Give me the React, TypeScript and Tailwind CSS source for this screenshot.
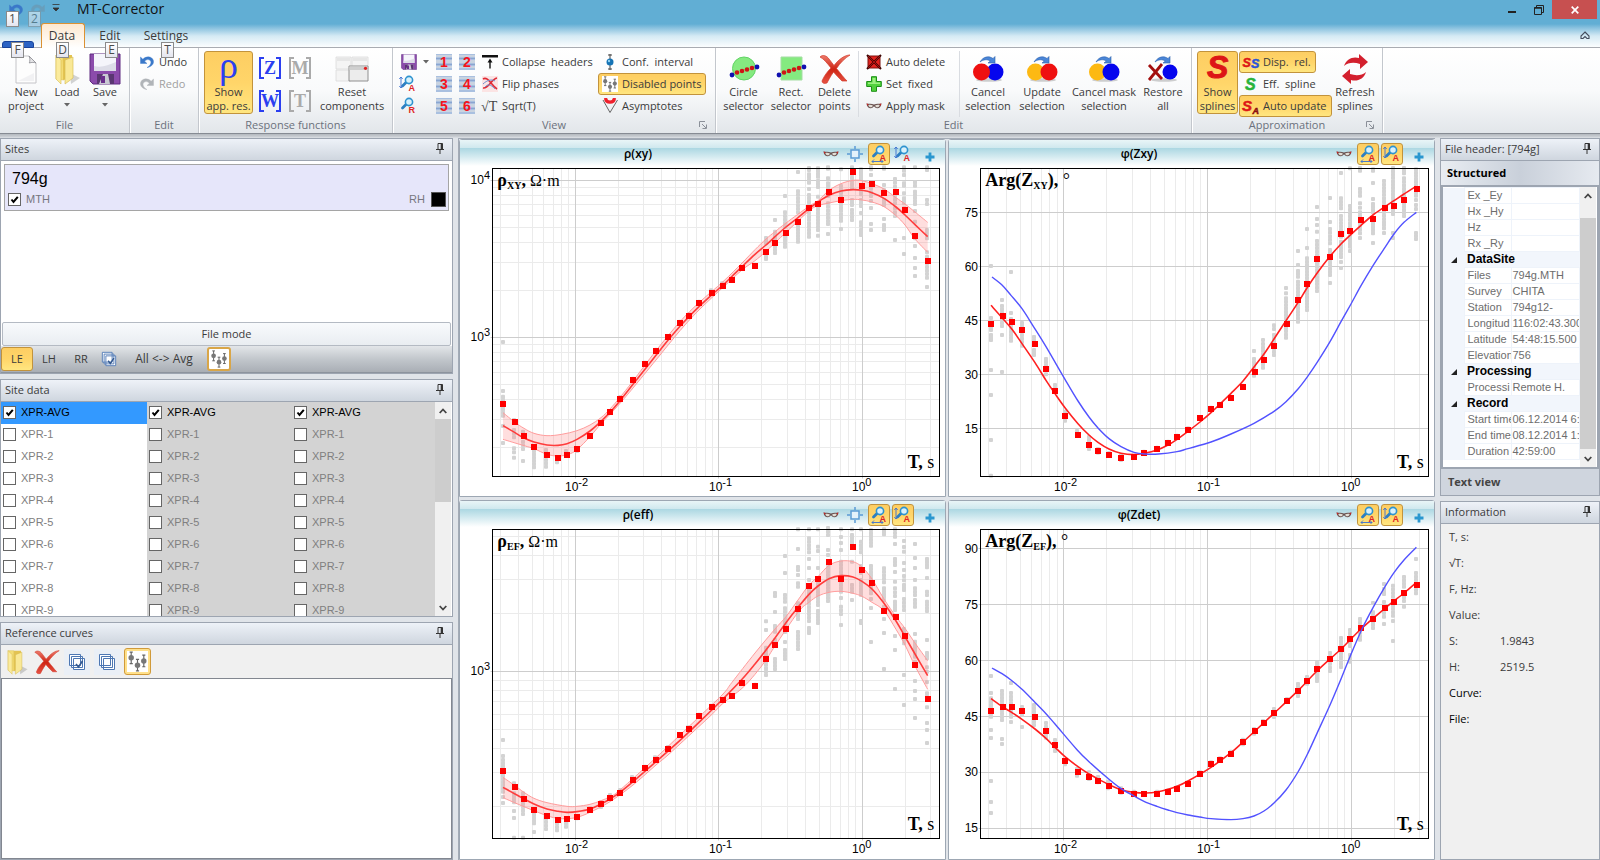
import { useId } from "react";
import type { ReactNode } from "react";
import clsx from "clsx";

type Pt = [number, number];

/* ---------- small icons ---------- */

function UndoIcon({ flip = false, color = "#3a78c9" }: { flip?: boolean; color?: string }) {
  return (
    <svg viewBox="0 0 16 16" className={clsx("size-4", flip && "-scale-x-100")}>
      <path d="M1.5 3v6.5H8L5.6 7.2C7 5.6 9.6 5 11.2 6.400C13 8.300 11.500 11.500 8 13.600C13 12.800 15.300 9.500 14.300 6.300C13 2.400 7.400 1.500 3.900 5.300Z" fill={color} stroke={color} strokeWidth=".4" />
    </svg>
  );
}

function PageIcon() {
  return (
    <svg viewBox="0 0 32 32" className="size-8">
      <path d="M6 3h13l7 7v20H6z" fill="#fdfdfd" stroke="#c4c4c8" />
      <path d="M19 3c1.500 3 .8 5 .3 7 2.500-.8 4.700-.8 6.700 0z" fill="#e6e6e8" stroke="#8c8c92" strokeWidth=".8" />
      <path d="M8 28h16v-8z" fill="#f1f1f3" />
    </svg>
  );
}

function FolderIcon({ className = "size-8" }: { className?: string }) {
  return (
    <svg viewBox="0 0 32 32" className={className}>
      <path d="M19 20l10 5-9 6z" fill="#000" opacity=".16" />
      <path d="M5 2h7l1 25-8-1z" fill="#f3dc74" stroke="#dcc04e" strokeWidth=".6" />
      <path d="M12 2h9v23l-9 2z" fill="#e3c352" />
      <path d="M14 7l8-3v21l-8 6z" fill="#f9e896" stroke="#d5b84a" strokeWidth=".6" />
      <path d="M5 2l5 5v24l-5-5z" fill="#fbeb9d" stroke="#d9bd50" strokeWidth=".6" />
    </svg>
  );
}

function SaveIcon({ className = "size-8" }: { className?: string }) {
  return (
    <svg viewBox="0 0 32 32" className={className}>
      <path d="M1 1h30v30H4l-3-3z" fill="#8b4bab" stroke="#5f2b80" />
      <path d="M5 1h22v17H5z" fill="#f5f5fb" />
      <path d="M5 13c8 2 14-1 22-4v9H5z" fill="#dddde8" />
      <path d="M8 21h17v10H8z" fill="#c9c9d3" />
      <path d="M8 21h6l-4 10H8zM19 21h6v10h-4z" fill="#5a3672" />
      <path d="M12 23h4v7h-4z" fill="#6b2f8d" />
    </svg>
  );
}

function ResetIcon() {
  return (
    <svg viewBox="0 0 34 32" className="h-8 w-[34px]">
      <g fill="#f4f4f4" stroke="#dadada" strokeWidth=".8">
        <path d="M1 4h15v12H1zM17 4h16v12H17zM1 17h15v11H1z" />
      </g>
      <path d="M2 5h13v3H2zM18 5h14v3H18z" fill="#e6e6e6" />
      <path d="M14 13h19v15H14z" fill="#ececec" stroke="#909090" />
      <path d="M14.500 13.500h18v3.500h-18z" fill="#cfcfcf" />
      <circle cx="30.500" cy="15.300" r="1.600" fill="#e02020" />
    </svg>
  );
}

function ZoomIcon({ letter, arrow }: { letter: string; arrow?: "x" | "y" }) {
  return (
    <svg viewBox="0 0 18 18" className="size-[18px]">
      <path d="M3.500 11L8 6.500" stroke="#2d7fc1" strokeWidth="2.800" strokeLinecap="round" />
      <circle cx="10" cy="5" r="3.600" fill="#d8f1fb" stroke="#2e93cf" strokeWidth="1.600" />
      <text x="9.500" y="15.500" fontSize="9" fontWeight="700" fill="#e02424" fontFamily="Liberation Sans, sans-serif">{letter}</text>
      {arrow === "x" && <path d="M2 16.500h11M4 14.500l-2 2 2 2M11 14.500l2 2-2 2" stroke="#3a6fd0" fill="none" strokeWidth=".9" />}
      {arrow === "y" && <path d="M2 2v11M.3 4L2 2l1.700 2M.3 11L2 13l1.700-2" stroke="#3a6fd0" fill="none" strokeWidth=".9" />}
    </svg>
  );
}

function NumberIcon({ n }: { n: number }) {
  return (
    <svg viewBox="0 0 16 16" className="size-4">
      <path d="M0 0h16v16H0z" fill="#a9c0e0" />
      <path d="M0 1h16v2H0zM0 6h16v3H0zM0 12h16v2H0z" fill="#c9d3e0" />
      <path d="M0 4.500h16M0 10.500h16" stroke="#8aa5cf" />
      <text x="8" y="13" textAnchor="middle" fontSize="14" fontWeight="700" fill="#f5141c" fontFamily="Liberation Sans, sans-serif">{n}</text>
    </svg>
  );
}

function CollapseIcon() {
  return (
    <svg viewBox="0 0 16 16" className="size-4">
      <path d="M0 1h16v2.500H0z" fill="#111" />
      <path d="M8 4.500l2.500 4h-5z" fill="#111" />
      <path d="M8 7v7.500" stroke="#111" strokeWidth="1.400" />
    </svg>
  );
}

function FlipIcon() {
  return (
    <svg viewBox="0 0 16 16" className="size-4">
      <path d="M0 0h16v16H0z" fill="#fbe4e4" />
      <path d="M1 3c5-3 8 6 14 10M1 12c6 1 8-9 14-10" stroke="#e02a35" strokeWidth="1.600" fill="none" />
      <path d="M1 8c4-4 9-5 12-3M3 11c4-5 8 0 10 2" stroke="#6d8fd0" fill="none" />
    </svg>
  );
}

function SqrtIcon() {
  return (
    <svg viewBox="0 0 16 16" className="size-4 overflow-visible">
      <text x="-1" y="13" fontSize="14" fill="#444" fontFamily="Liberation Serif, serif">√T</text>
    </svg>
  );
}

function ConfIcon() {
  return (
    <svg viewBox="0 0 16 16" className="size-4">
      <path d="M8 0v16M6 1h4M6 15h4" stroke="#444" />
      <circle cx="8" cy="8" r="3.500" fill="#1573b5" />
      <circle cx="7" cy="7" r="1.200" fill="#8dd0f3" />
    </svg>
  );
}

function PointsIcon({ className = "size-4" }: { className?: string }) {
  return (
    <svg viewBox="0 0 20 20" className={className}>
      <path d="M0 0h20v20H0z" fill="#fff" />
      <g stroke="#666" strokeWidth="1.100">
        <path d="M4 1v11M2.500 1h3M2.500 12h3M10 8v11M8.500 8h3M8.500 19h3M16 4v11M14.500 4h3M14.500 15h3" />
      </g>
      <g fill="#777">
        <circle cx="4" cy="6.500" r="2.600" />
        <circle cx="10" cy="13.500" r="2.600" />
        <circle cx="16" cy="9.500" r="2.600" />
      </g>
    </svg>
  );
}

function AsymptoteIcon() {
  return (
    <svg viewBox="0 0 16 16" className="size-4">
      <path d="M1 2l7 12.500L15.500 2" stroke="#666" fill="none" />
      <path d="M3.500 0c.6 5.500 8.400 5.500 9 0" stroke="#f0202c" strokeWidth="3.200" fill="none" />
    </svg>
  );
}

function SelectorIcon({ shape }: { shape: "circle" | "rect" }) {
  const dots: Pt[] = [[9, 19.5], [14, 18], [19, 16.5], [24, 15]];
  return (
    <svg viewBox="0 0 32 32" className="size-8">
      {shape === "circle" ? (
        <circle cx="16" cy="15.500" r="11.500" fill="#85ea80" stroke="#62d466" />
      ) : (
        <path d="M6 4h21v23H6z" fill="#85ea80" stroke="#a5dda4" />
      )}
      {dots.map(([x, y]) => <circle key={x} cx={x} cy={y} r="2.300" fill="#cf1515" />)}
      <circle cx="4" cy="22" r="2.400" fill="#1010b0" />
      <circle cx="29" cy="14" r="2.400" fill="#1010b0" />
    </svg>
  );
}

function CrossIcon({ className = "size-8" }: { className?: string }) {
  const id = useId();
  return (
    <svg viewBox="0 0 32 32" className={className}>
      <defs>
        <linearGradient id={id} x1="0" y1="0" x2="0" y2="1">
          <stop offset="0" stopColor="#ee7e6f" />
          <stop offset=".5" stopColor="#cf2413" />
          <stop offset="1" stopColor="#e65345" />
        </linearGradient>
      </defs>
      <path d="M1 4C4 1 8 3 10 6L15 12.500C20 6 26 2 31 2C26 5 21 10 17.500 15.500C22 21 25 25 28 28H23C20 25 17 22 14.500 19C11 24 9 28 8 30C5 31 3 30 3 28C5 23 8 19 12 15C8 10 5 6 1 4Z" fill={`url(#${id})`} stroke="#d33a2a" strokeWidth=".7" />
    </svg>
  );
}

function AutoDeleteIcon() {
  return (
    <svg viewBox="0 0 16 16" className="size-4">
      <path d="M2 2h12v12H2z" fill="#e3221d" stroke="#7d120e" />
      <path d="M1 1l14 14M15 1L1 15" stroke="#3b0604" strokeWidth="2" />
      <path d="M2 2l12 12M14 2L2 14" stroke="#c11" strokeWidth=".8" />
    </svg>
  );
}

function PlusIcon() {
  return (
    <svg viewBox="0 0 16 16" className="size-4">
      <path d="M5.500.7h5v4.800h4.800v5h-4.800v4.800h-5v-4.800H.7v-5h4.800z" fill="#52d23c" stroke="#1d8f16" />
      <path d="M6.500 2h3v4.500H14V8H2V6.500h4.500z" fill="#9bf07f" />
    </svg>
  );
}

function MaskIcon() {
  return (
    <svg viewBox="0 0 16 16" className="size-4">
      <path d="M.5 5.500c2 .4 5 .2 7.500 1 2.500-.8 5.500-.6 7.500-1-.3 3-1.800 4.800-4.200 4.800-1.900 0-2.500-1.800-3.300-1.800s-1.400 1.800-3.300 1.800C2.300 10.300.8 8.500.5 5.500z" fill="#6b5452" />
      <path d="M2.300 6.900c1.700-.3 3.400-.1 4.600.5-.6 2.500-3.900 2.700-4.600-.5zM13.700 6.900c-1.700-.3-3.400-.1-4.600.5.6 2.500 3.900 2.700 4.600-.5z" fill="#e2ddd5" />
      <path d="M.5 5.500l2 .4-.8 2zM15.500 5.500l-2 .4.800 2z" fill="#c22" />
    </svg>
  );
}

function BallsIcon({ left, right }: { left: "red" | "gold" | "cross"; right: "blue" | "red" }) {
  const fill = { red: "#ef1010", gold: "#fdb913", blue: "#0505ee" };
  const back = <circle cx="23" cy="19" r={left === "cross" ? 7.5 : 8.5} fill={fill[right]} />;
  return (
    <svg viewBox="0 0 32 32" className="size-8">
      <ellipse cx="17" cy="27" rx="13" ry="1.800" fill="#000" opacity=".18" />
      {left === "red" && back}
      {left === "cross" ? (
        <path d="M2 12l13 14M15 11L2 27" stroke="#a30f0f" strokeWidth="2.800" />
      ) : (
        <circle cx="9.500" cy="19" r="8.500" fill={fill[left]} />
      )}
      {left !== "red" && back}
      <path d="M8 9C11 3.500 17 2.500 21 5.500L23 3.500V10h-7l2.300-2C15 6 11.500 6.500 8 9z" fill="#4a86d8" stroke="#2d62ad" strokeWidth=".6" />
    </svg>
  );
}

type Glyph = { s: string; x: number; y: number; size: number; color: string };

function SplineIcon({ className = "size-4", glyphs }: { className?: string; glyphs: Glyph[] }) {
  return (
    <svg viewBox="0 0 32 32" className={clsx(className, "overflow-visible")} fontFamily="Liberation Sans, sans-serif" fontStyle="italic" fontWeight="700">
      {glyphs.map((g, i) => (
        <text key={i} x={g.x} y={g.y} fontSize={g.size} fill={g.color} stroke={g.color}>{g.s}</text>
      ))}
    </svg>
  );
}

function RefreshIcon() {
  return (
    <svg viewBox="0 0 32 32" className="size-8">
      <path d="M5 13C7 6 14 3 20 5L20 1l9 8-8 7v-5C15 9 9 9.500 5 13z" fill="#d3202e" />
      <path d="M27 19C25 26 18 29 12 27L12 31l-9-8 8-7v5C17 23 23 22.500 27 19z" fill="#d3202e" />
    </svg>
  );
}

function StackIcon({ checked = false, className = "size-[18px]" }: { checked?: boolean; className?: string }) {
  return (
    <svg viewBox="0 0 18 18" className={className}>
      <g fill="#fff" stroke="#4d77b3">
        <path d="M1.500 1.500h11v11h-11zM3.500 3.500h11v11h-11zM5.500 5.500h11v11h-11z" />
      </g>
      {checked && <path d="M8 11l2.500 3L14.500 8" stroke="#33588f" strokeWidth="1.600" fill="none" />}
    </svg>
  );
}

function PinIcon() {
  return (
    <svg viewBox="0 0 10 12" className="h-3 w-2.5">
      <path d="M3 .5h4.500v6H3zM1 6.500h8M5 7v4" fill="none" stroke="#333" />
      <path d="M6.500.5v6" stroke="#333" strokeWidth="1.600" />
    </svg>
  );
}

function FitIcon() {
  return (
    <svg viewBox="0 0 16 16" className="size-4">
      <path d="M4 4h8v8H4z" fill="#e4f1fb" stroke="#5b9bd5" strokeWidth="1.500" />
      <path d="M8 0v3M8 13v3M0 8h3M13 8h3" stroke="#5b9bd5" strokeWidth="1.500" />
    </svg>
  );
}

function AddIcon() {
  return (
    <svg viewBox="0 0 10 10" className="size-2.5">
      <path d="M5 .5v9M.5 5h9" stroke="#2a97cf" strokeWidth="2.800" />
    </svg>
  );
}

/* ---------- ribbon ---------- */

const active = "border-[#c2933c] bg-linear-to-b from-[#fdce63] via-[#ffd569] to-[#ffe680] rounded-[3px]";

function KeyTip({ k, className }: { k: string; className: string }) {
  return (
    <span className={clsx("absolute z-10 flex h-4 w-[13px] items-center justify-center border border-[#8a8a8a] bg-linear-to-b from-white to-[#e4e5ef] text-[12px] leading-none text-[#4b4b4b]", className)}>
      {k}
    </span>
  );
}

function Group({ title, width, pad = "pl-1", launcher, children }: { title: string; width: string; pad?: string; launcher?: boolean; children: ReactNode }) {
  return (
    <section className={clsx("flex shrink-0 flex-col border-r border-[#c3c7cd] pt-[3px] shadow-[1px_0_0_#fff]", width)}>
      <div className={clsx("flex h-[67px]", pad)}>{children}</div>
      <div className="grid h-4 grid-cols-[1fr_auto_1fr] items-center text-[#6b717c]">
        <span />
        <h2>{title}</h2>
        {launcher && (
          <button aria-label={`${title} options`} className="mr-2 justify-self-end">
            <svg viewBox="0 0 8 8" className="size-2">
              <path d="M.5 6V.5H6M3 3l4 4M7.500 3.500v4h-4" fill="none" stroke="#8b9099" />
            </svg>
          </button>
        )}
      </div>
    </section>
  );
}

function Big({ icon, lines, width, on, caret }: { icon: ReactNode; lines: string[]; width: string; on?: boolean; caret?: boolean }) {
  return (
    <button className={clsx("flex h-[63px] shrink-0 flex-col items-center border pt-px leading-[14px] whitespace-nowrap", width, on ? active : "border-transparent")}>
      <span className="flex h-8 items-center">{icon}</span>
      {lines.map((l) => <span key={l}>{l}</span>)}
      {caret && <Caret className="mt-1" />}
    </button>
  );
}

function Caret({ className }: { className?: string }) {
  return (
    <svg viewBox="0 0 6 4" className={clsx("h-1 w-1.5", className)}>
      <path d="M0 0h6L3 3.500z" fill="#666" />
    </svg>
  );
}

function Small({ icon, label, on, muted }: { icon: ReactNode; label: string; on?: boolean; muted?: boolean }) {
  return (
    <button className={clsx("flex h-[22px] items-center gap-1 self-start border pr-1 pl-[3px] whitespace-pre", on ? active : "border-transparent", muted && "text-[#a0a0a0]")}>
      {icon}
      <span>{label}</span>
    </button>
  );
}

function Bracket({ letter, muted }: { letter: string; muted?: boolean }) {
  const color = muted ? "#aaaaaa" : "#2b3ff0";
  return (
    <button className="flex h-[33px] w-[30px] items-center justify-center">
      <svg viewBox="0 0 24 24" className="size-6">
        <path d="M6 2H2v20h4M18 2h4v20h-4" fill="none" stroke={color} strokeWidth="2" />
        <text x="12" y="18" textAnchor="middle" fontSize="18" fontWeight="700" fill={color} fontFamily="Liberation Serif, serif">{letter}</text>
      </svg>
    </button>
  );
}

function TitleBar() {
  return (
    <header className="bg-linear-to-b from-[#61aed4] from-50% via-[#d5eaf4] via-75% to-white">
      <div className="flex h-[22px] items-start">
        <div className="flex pt-0.5 pl-1">
          <button aria-label="Undo" className="relative w-[22px] pl-1">
            <UndoIcon />
            <KeyTip k="1" className="top-[9px] left-[2px]" />
          </button>
          <button aria-label="Redo" className="relative w-[22px] pl-1 opacity-50">
            <UndoIcon flip color="#6f8fa3" />
            <KeyTip k="2" className="top-[9px] left-[2px]" />
          </button>
          <button aria-label="Customize toolbar" className="flex w-3 justify-end pt-0.5">
            <svg viewBox="0 0 8 8" className="size-2">
              <path d="M.5.500h7M1 4h6L4 7z" fill="#333" stroke="#333" strokeWidth=".8" />
            </svg>
          </button>
        </div>
        <h1 className="pl-[17px] text-[14px] leading-[17px] text-[#111]">MT-Corrector</h1>
        <div className="ml-auto flex pr-[3px]">
          <button aria-label="Minimize" className="flex h-[19px] w-[27px] items-end justify-center pb-[6px]">
            <span className="h-0.5 w-2 bg-[#222]" />
          </button>
          <button aria-label="Restore" className="flex h-[19px] w-[27px] items-center justify-center">
            <svg viewBox="0 0 10 10" className="size-2.5">
              <path d="M.5 2.500h7v7h-7zM2.500 2V.500h7v7H8" fill="none" stroke="#222" />
              <path d="M.5 3h7" stroke="#222" strokeWidth="1.500" />
            </svg>
          </button>
          <button aria-label="Close" className="flex h-[19px] w-[45px] items-center justify-center bg-[#c75050]">
            <svg viewBox="0 0 8 8" className="size-2">
              <path d="M.7.700l6.600 6.600M7.300.7L.7 7.300" stroke="#fff" strokeWidth="1.700" />
            </svg>
          </button>
        </div>
      </div>
      <nav className="flex h-[26px] items-end pl-0.5 text-[12px] leading-[18px]">
        <button aria-label="File" className="relative mr-[7px] h-[7px] w-8 rounded-t-[3px] border border-[#17439b] bg-[#2b63c4]">
          <KeyTip k="F" className="top-0 left-[8px]" />
        </button>
        <button className="relative z-10 flex h-[25px] w-11 items-end justify-center rounded-t-[3px] border border-b-0 border-[#dc9132] bg-linear-to-b from-[#fde8cf] to-white pr-0.5 pb-[3px]">
          Data
          <KeyTip k="D" className="top-[18px] left-[14px]" />
        </button>
        <button className="relative flex h-[25px] w-[50px] items-end justify-center pb-[3px]">
          Edit
          <KeyTip k="E" className="top-[19px] left-[20px]" />
        </button>
        <button className="relative flex h-[25px] w-[62px] items-end justify-center pb-[3px]">
          Settings
          <KeyTip k="T" className="top-[19px] left-[26px]" />
        </button>
        <button aria-label="Collapse ribbon" className="mr-[10px] mb-[8px] ml-auto">
          <svg viewBox="0 0 10 9" className="h-[9px] w-2.5">
            <path d="M5 1l4 4v2.500H7L5 5.500 3 7.500H1V5z" fill="none" stroke="#444c5c" strokeWidth="1.100" />
          </svg>
        </button>
      </nav>
    </header>
  );
}

function Ribbon() {
  return (
    <div className="-mt-px flex h-[87px] shrink-0 border-t border-b border-t-[#a9acb2] border-b-[#868b93] bg-linear-to-b from-white via-[#f9fafb] to-[#e2e6ea]">
      <Group title="File" width="w-[130px]">
        <Big icon={<PageIcon />} lines={["New", "project"]} width="w-[44px]" />
        <Big icon={<FolderIcon />} lines={["Load"]} width="w-[38px]" caret />
        <Big icon={<SaveIcon />} lines={["Save"]} width="w-[38px]" caret />
      </Group>
      <Group title="Edit" width="w-[69px]" pad="pl-[5px]">
        <div className="flex flex-col">
          <Small icon={<UndoIcon />} label="Undo" />
          <Small icon={<UndoIcon flip color="#b0b4b8" />} label="Redo" muted />
        </div>
      </Group>
      <Group title="Response functions" width="w-[194px]" pad="pl-[5px]">
        <Big
          icon={<span className="pb-2 font-['Liberation_Serif',serif] text-[38px] leading-none text-[#2b3ff0]">ρ</span>}
          lines={["Show", "app. res."]}
          width="w-[49px]"
          on
        />
        <div className="ml-0.5 grid grid-cols-2">
          <Bracket letter="Z" />
          <Bracket letter="M" muted />
          <Bracket letter="W" />
          <Bracket letter="T" muted />
        </div>
        <Big icon={<ResetIcon />} lines={["Reset", "components"]} width="w-[74px]" />
      </Group>
      <Group title="View" width="w-[323px]" pad="pl-[6px]" launcher>
        <div className="flex w-[33px] flex-col">
          <button aria-label="Save view" className="flex h-[22px] items-center gap-1.5 pl-0.5">
            <SaveIcon className="size-4" />
            <Caret />
          </button>
          <button aria-label="Auto zoom" className="flex h-[22px] items-center"><ZoomIcon letter="A" arrow="y" /></button>
          <button aria-label="Reset zoom" className="flex h-[22px] items-center"><ZoomIcon letter="R" /></button>
        </div>
        <div className="grid h-[66px] w-[46px] grid-cols-2">
          {[1, 2, 3, 4, 5, 6].map((n) => (
            <button key={n} aria-label={`Layout ${n}`} className="flex h-[22px] items-center justify-center"><NumberIcon n={n} /></button>
          ))}
        </div>
        <div className="flex w-[120px] flex-col">
          <Small icon={<CollapseIcon />} label="Collapse  headers" />
          <Small icon={<FlipIcon />} label="Flip phases" />
          <Small icon={<SqrtIcon />} label="Sqrt(T)" />
        </div>
        <div className="flex w-[113px] flex-col">
          <Small icon={<ConfIcon />} label="Conf.  interval" />
          <Small icon={<PointsIcon />} label="Disabled points" on />
          <Small icon={<AsymptoteIcon />} label="Asymptotes" />
        </div>
      </Group>
      <Group title="Edit" width="w-[476px]">
        <Big icon={<SelectorIcon shape="circle" />} lines={["Circle", "selector"]} width="w-[47px]" />
        <Big icon={<SelectorIcon shape="rect" />} lines={["Rect.", "selector"]} width="w-[48px]" />
        <Big icon={<CrossIcon />} lines={["Delete", "points"]} width="w-[39px]" />
        <div className="ml-1 flex w-[102px] flex-col border-x border-[#d9dce1] pl-[3px]">
          <Small icon={<AutoDeleteIcon />} label="Auto delete" />
          <Small icon={<PlusIcon />} label="Set  fixed" />
          <Small icon={<MaskIcon />} label="Apply mask" />
        </div>
        <Big icon={<BallsIcon left="red" right="blue" />} lines={["Cancel", "selection"]} width="w-[56px]" />
        <Big icon={<BallsIcon left="gold" right="red" />} lines={["Update", "selection"]} width="w-[52px]" />
        <Big icon={<BallsIcon left="gold" right="blue" />} lines={["Cancel mask", "selection"]} width="w-[72px]" />
        <Big icon={<BallsIcon left="cross" right="blue" />} lines={["Restore", "all"]} width="w-[46px]" />
      </Group>
      <Group title="Approximation" width="w-[191px]" pad="pl-[5px]" launcher>
        <Big icon={<SplineIcon className="size-8" glyphs={[{ s: "S", x: 5, y: 25, size: 32, color: "#dd1616" }]} />} lines={["Show", "splines"]} width="w-[41px]" on />
        <div className="ml-px flex w-[94px] flex-col">
          <Small
            icon={<SplineIcon glyphs={[{ s: "S", x: -1, y: 25, size: 25, color: "#dd1616" }, { s: "S", x: 16, y: 27, size: 25, color: "#2b55d8" }]} />}
            label="Disp.  rel."
            on
          />
          <Small icon={<SplineIcon glyphs={[{ s: "S", x: 4, y: 28, size: 32, color: "#29b33a" }]} />} label="Eff.  spline" />
          <Small
            icon={<SplineIcon glyphs={[{ s: "S", x: -2, y: 26, size: 30, color: "#dd1616" }, { s: "A", x: 19, y: 31, size: 18, color: "#8c1010" }]} />}
            label="Auto update"
            on
          />
        </div>
        <Big icon={<RefreshIcon />} lines={["Refresh", "splines"]} width="w-[44px]" />
      </Group>
    </div>
  );
}

/* ---------- side panels ---------- */

function Panel({ title, children }: { title: string; children: ReactNode }) {
  return (
    <section className="flex min-h-0 min-w-0 flex-col border border-[#9da5b1] bg-white">
      <div className="flex h-[22px] shrink-0 items-center justify-between border-b border-[#9da5b1] bg-linear-to-b from-[#eef2f8] to-[#cfd6df] pr-[7px] pb-px pl-1">
        <h2>{title}</h2>
        <button aria-label={`Pin ${title}`}><PinIcon /></button>
      </div>
      {children}
    </section>
  );
}

function Check({ label, checked }: { label: string; checked?: boolean }) {
  return (
    <label className="flex items-center gap-[5px] font-['Liberation_Sans',sans-serif]">
      <span className="relative flex">
        <input type="checkbox" defaultChecked={checked} className="peer size-[13px] appearance-none border border-[#666] bg-white" />
        <svg viewBox="0 0 13 13" className="pointer-events-none absolute inset-0 hidden size-[13px] peer-checked:block">
          <path d="M3.500 6.500L5.500 9 9.800 3.800" fill="none" stroke="#000" strokeWidth="2" />
        </svg>
      </span>
      {label}
    </label>
  );
}

function Scrollbar({ thumb }: { thumb: string }) {
  return (
    <div className="flex w-[17px] shrink-0 flex-col border-r border-white bg-[#f0f0f0]">
      <button aria-label="Scroll up" className="flex h-[17px] shrink-0 items-center justify-center">
        <svg viewBox="0 0 8 6" className="h-1.5 w-2"><path d="M.7 5L4 1.500 7.300 5" fill="none" stroke="#444" strokeWidth="1.800" /></svg>
      </button>
      <div className="min-h-0 flex-1"><div className={clsx("bg-[#cdcdcd]", thumb)} /></div>
      <button aria-label="Scroll down" className="flex h-[17px] shrink-0 items-center justify-center">
        <svg viewBox="0 0 8 6" className="h-1.5 w-2"><path d="M.7 1L4 4.500 7.300 1" fill="none" stroke="#444" strokeWidth="1.800" /></svg>
      </button>
    </div>
  );
}

const rows = ["XPR-AVG", "XPR-1", "XPR-2", "XPR-3", "XPR-4", "XPR-5", "XPR-6", "XPR-7", "XPR-8", "XPR-9"];
const columns = ["w-[146px] bg-white", "w-[145px] bg-[#d3d3d3]", "flex-1 bg-[#d3d3d3]"];

function LeftSide() {
  return (
    <aside className="grid w-[453px] shrink-0 grid-rows-[236fr_238fr_238fr] gap-[5px]">
      <Panel title="Sites">
        <div className="flex-1 p-[3px]">
          <div className="border border-[#a5a5a5] bg-[#e6e6fa] pt-[3px] pr-[2px] pb-0.5 pl-[3px] text-[#77777f]">
            <p className="pl-1 font-['Liberation_Sans',sans-serif] text-[16px] leading-[22px] text-black">794g</p>
            <div className="flex h-[18px] items-center justify-between">
              <Check label="MTH" checked />
              <span className="flex items-center gap-[6px] font-['Liberation_Sans',sans-serif]">
                RH
                <span className="size-[15px] border border-[#555] bg-black" />
              </span>
            </div>
          </div>
        </div>
        <button className="mx-px h-6 shrink-0 rounded-[2px] border border-[#b4bac3] bg-linear-to-b from-[#f8fafc] to-[#e9edf1]">File mode</button>
        <div className="flex h-[27px] shrink-0 items-center border-b border-[#8d949e] bg-linear-to-b from-[#e3e6e9] via-[#c2c7cc] to-[#a9aeb5]">
          <button className={clsx("h-6 w-8 border", active)}>LE</button>
          <button className="h-6 w-8">LH</button>
          <button className="h-6 w-8">RR</button>
          <button aria-label="Check all" className="flex h-6 w-6 items-center justify-center"><StackIcon checked className="size-4" /></button>
          <button className="h-6 w-[86px] text-[12px]">All &lt;-&gt; Avg</button>
          <button aria-label="Show points" className="flex size-6 items-center justify-center rounded-[3px] border-2 border-[#d9a648] bg-white"><PointsIcon className="size-[18px]" /></button>
        </div>
      </Panel>

      <Panel title="Site data">
        <div className="flex min-h-0 flex-1 overflow-hidden">
          {columns.map((c, col) => (
            <ul key={c} className={clsx("overflow-hidden", c)}>
              {rows.map((r, i) => (
                <li key={r} className={clsx("flex h-[22px] items-center pb-0.5 pl-0.5", i ? "text-[#808080]" : "text-black", !i && !col && "bg-[#3399ff]")}>
                  <Check label={r} checked={!i} />
                </li>
              ))}
            </ul>
          ))}
          <Scrollbar thumb="h-[46%]" />
        </div>
      </Panel>

      <Panel title="Reference curves">
        <div className="flex h-[33px] shrink-0 items-center gap-1 bg-[#f0f0f0] pl-[3px]">
          <button aria-label="Open" className="flex size-[26px] items-center justify-center"><FolderIcon className="size-[26px]" /></button>
          <button aria-label="Delete" className="flex size-[26px] items-center justify-center"><CrossIcon className="size-[26px]" /></button>
          <button aria-label="Check all" className="flex size-[26px] items-center justify-center bg-[#eaeff6]"><StackIcon checked /></button>
          <button aria-label="Uncheck all" className="flex size-[26px] items-center justify-center bg-[#eaeff6]"><StackIcon /></button>
          <button aria-label="Show points" className="flex size-[27px] items-center justify-center rounded-[3px] border border-[#d09a3a] bg-[#ffe08a]"><PointsIcon className="size-[21px]" /></button>
        </div>
        <div className="flex-1 border border-[#828790] bg-white" />
      </Panel>
    </aside>
  );
}

const properties: { group?: string; items: [string, string][] }[] = [
  { items: [["Ex _Ey", ""], ["Hx _Hy", ""], ["Hz", ""], ["Rx _Ry", ""]] },
  {
    group: "DataSite",
    items: [
      ["Files", "794g.MTH"],
      ["Survey", "CHITA"],
      ["Station", "794g12-"],
      ["Longitud", "116:02:43.300"],
      ["Latitude", "54:48:15.500"],
      ["Elevation", "756"],
    ],
  },
  { group: "Processing", items: [["Processi", "Remote H."]] },
  { group: "Record", items: [["Start time", "06.12.2014 6:4"], ["End time", "08.12.2014 1:3"], ["Duration", "42:59:00"]] },
];

const info = [
  ["T, s:", ""],
  ["√T:", ""],
  ["F, Hz:", ""],
  ["Value:", ""],
  ["S:", "1.9843"],
  ["H:", "2519.5"],
  ["Curve:", ""],
  ["File:", ""],
];

function RightSide() {
  return (
    <aside className="grid w-[160px] shrink-0 grid-cols-1 grid-rows-[358fr_359fr] gap-[5px]">
      <Panel title="File header: [794g]">
        <button className="h-[26px] shrink-0 border-b-2 border-[#9da5b1] bg-linear-to-r from-[#e9edf2] via-[#c9d0da] to-[#e6eaf0] pl-[6px] text-left font-bold text-black">Structured</button>
        <div className="flex min-h-0 flex-1 overflow-hidden border-x-2 border-[#9da5b1] bg-white">
          <div className="min-w-0 flex-1 overflow-hidden">
            <table className="w-full table-fixed border-collapse font-['Liberation_Sans',sans-serif] text-[#6d6d6d]">
              <colgroup>
                <col className="w-[21px]" />
                <col className="w-[47px]" />
                <col />
              </colgroup>
              {properties.map((p, i) => (
                <tbody key={i}>
                  {p.group && (
                    <tr className="h-4 bg-[#f2f6fc] text-black">
                      <td className="p-0">
                        <svg viewBox="0 0 6 6" className="ml-2 size-1.5"><path d="M6 0v6H0z" fill="#222" /></svg>
                      </td>
                      <th colSpan={2} className="overflow-hidden p-0 pl-[3px] text-left text-[12px] leading-[15px] font-bold">{p.group}</th>
                    </tr>
                  )}
                  {p.items.map(([name, value]) => (
                    <tr key={name} className="h-4">
                      <td className="bg-[#f2f6fc] p-0" />
                      <td className="overflow-hidden border border-[#eef3fa] p-0 pl-[3px] leading-[15px] whitespace-nowrap">{name}</td>
                      <td className="overflow-hidden border border-[#eef3fa] p-0 pl-px leading-[15px] whitespace-nowrap">{value}</td>
                    </tr>
                  ))}
                </tbody>
              ))}
            </table>
          </div>
          <Scrollbar thumb="mt-[14px] h-[94%]" />
        </div>
        <button className="h-7 shrink-0 border-t-2 border-[#9da5b1] bg-[#cfd5de] pl-[7px] text-left font-bold text-[#444]">Text view</button>
      </Panel>
      <Panel title="Information">
        <dl className="flex-1 bg-[#f0f0f0] pl-2">
          {info.map(([k, v]) => (
            <div key={k} className={clsx("flex h-[26px] items-center", (k === "Curve:" || k === "File:") && "text-black")}>
              <dt className="w-[51px]">{k}</dt>
              <dd>{v}</dd>
            </div>
          ))}
        </dl>
      </Panel>
    </aside>
  );
}

/* ---------- charts ---------- */

// Chart geometry below is kept in thirds of a pixel.
type ChartProps = {
  title: string;
  quantity: string;
  sub: string;
  unit: string;
  fit?: boolean;
  autoY?: boolean;
  origin: Pt;
  size: Pt;
  frame: [number, number, number, number];
  decades: number[];
  hMajor: [number, string, string?][];
  hDecade?: number;
  xs: number[];
  ys: number[];
  dots: string;
  curve: string;
  curve2?: string;
  band?: [string, string];
};

const parse = (s: string): Pt[] => s.trim().split(/\s+/).map((p) => p.split(",").map(Number) as Pt);

// "x: y y1-y2 ..." per line, a range is filled with evenly spaced dots
function expandDots(s: string): Pt[] {
  const out: Pt[] = [];
  s.trim().split(/[\n;]+/).forEach((line) => {
    const [x, list] = line.split(":");
    list.trim().split(/\s+/).forEach((t) => {
      const [a, b = a] = t.split("-").map(Number);
      const n = Math.max(1, Math.round((b - a) / 10));
      for (let i = 0; i <= (b === a ? 0 : n); i++) out.push([Number(x), a + ((b - a) * i) / n]);
    });
  });
  return out;
}

function smooth(pts: Pt[]): string {
  let d = "";
  for (let i = 0; i < pts.length - 1; i++) {
    const p0 = pts[i - 1] ?? pts[i];
    const p1 = pts[i];
    const p2 = pts[i + 1];
    const p3 = pts[i + 2] ?? p2;
    d += `C${p1[0] + (p2[0] - p0[0]) / 6} ${p1[1] + (p2[1] - p0[1]) / 6} ${p2[0] - (p3[0] - p1[0]) / 6} ${p2[1] - (p3[1] - p1[1]) / 6} ${p2[0]} ${p2[1]}`;
  }
  return d;
}

function Chart(p: ChartProps) {
  const [ox, oy] = p.origin;
  const X = (v: number) => (v - ox) / 3;
  const Y = (v: number) => (v - oy) / 3;
  const line = (s: string) => parse(s).map(([x, y]) => [X(x), Y(y)] as Pt);
  const path = (s: string) => {
    const pts = line(s);
    return `M${pts[0][0]} ${pts[0][1]}${smooth(pts)}`;
  };
  // gridlines and frame sit on pixel centres
  const gx = (v: number) => Math.floor(X(v)) + 0.5;
  const gy = (v: number) => Math.floor(Y(v)) + 0.5;
  const [l, t, r, b] = p.frame;
  const within = (v: number, lo: number, hi: number) => v > lo + 2 && v < hi - 2;
  const vMinor = [p.decades[0] - 431, ...p.decades]
    .flatMap((d) => [2, 3, 4, 5, 6, 7, 8, 9].map((k) => d + 431 * Math.log10(k)))
    .filter((x) => within(x, l, r));
  const hMinor = p.hDecade
    ? [-1, 0, 1].flatMap((n) => [2, 3, 4, 5, 6, 7, 8, 9].map((k) => p.hMajor[0][0] - p.hDecade! * (n + Math.log10(k)))).filter((y) => within(y, t, b))
    : [];
  let bandPath = "";
  if (p.band) {
    const up = line(p.band[0]);
    const low = line(p.band[1]).reverse();
    bandPath = `M${up[0][0]} ${up[0][1]}${smooth(up)}L${low[0][0]} ${low[0][1]}${smooth(low)}Z`;
  }

  return (
    <section className="flex min-h-0 min-w-0 flex-col rounded-t-[3px] border border-[#9da7b3] bg-white">
      <div className="flex h-[26px] shrink-0 items-center bg-[linear-gradient(#e9f5f7_0,#cfe8ee_8px,#abd7e2_8px,#fff_26px)] pr-[10px]">
        <h2 className="flex-1 pt-0.5 pr-[4px] text-center text-[12px] font-semibold text-black">{p.title}</h2>
        <div className="flex items-center gap-0.5 pt-0.5">
          <button aria-label="Mask" className="flex size-[22px] items-center justify-center"><MaskIcon /></button>
          {p.fit && <button aria-label="Fit" className="flex size-[22px] items-center justify-center"><FitIcon /></button>}
          <button aria-label="Auto zoom X" className={clsx("flex size-[22px] items-center justify-center border", active)}><ZoomIcon letter="A" arrow="x" /></button>
          <button aria-label="Auto zoom Y" className={clsx("flex size-[22px] items-center justify-center border", p.autoY ? active : "border-transparent")}><ZoomIcon letter="A" arrow="y" /></button>
          <button aria-label="Add" className="ml-[9px] pt-1.5"><AddIcon /></button>
        </div>
      </div>
      <svg viewBox={`0 0 ${p.size[0]} ${p.size[1]}`} className="min-h-0 w-full flex-1 overflow-visible" fontFamily="Liberation Sans, sans-serif" fontSize="12">
        <g stroke="#ebebeb">
          {vMinor.map((x) => <path key={x} d={`M${gx(x)} ${gy(t)}V${gy(b)}`} />)}
          {hMinor.map((y) => <path key={y} d={`M${gx(l)} ${gy(y)}H${gx(r)}`} />)}
        </g>
        <g stroke="#cdcdcd">
          {p.decades.map((x) => <path key={x} d={`M${gx(x)} ${gy(t)}V${gy(b) + 2}`} />)}
          {p.hMajor.map(([y]) => <path key={y} d={`M${gx(l) - 2} ${gy(y)}H${gx(r)}`} />)}
        </g>
        {expandDots(p.dots).map(([x, y], i) => <rect key={i} x={Math.round(X(x) - 2)} y={Y(y) - 2} width="4" height="4" rx="1" fill="#d3d3d3" />)}
        {p.band && (
          <>
            <path d={bandPath} fill="#ff8080" fillOpacity=".26" />
            <path d={path(p.band[0])} fill="none" stroke="#ff9c9c" />
            <path d={path(p.band[1])} fill="none" stroke="#ff9c9c" />
          </>
        )}
        <path d={path(p.curve)} fill="none" stroke={p.band ? "#ff3c3c" : "#ff2020"} strokeWidth="1.600" />
        {p.xs.map((x, i) => <rect key={x} x={Math.round(X(x) - 3)} y={Math.round(Y(p.ys[i]) - 3)} width="6" height="6" fill="#ff0000" />)}
        {p.curve2 && <path d={path(p.curve2)} fill="none" stroke="#5252ff" strokeWidth="1.400" />}
        <rect x={gx(l)} y={gy(t)} width={gx(r) - gx(l)} height={gy(b) - gy(t)} fill="none" stroke="#000" />
        {p.decades.map((x, i) => (
          <text key={x} x={Math.round(X(x)) - 10} y={Math.round(Y(b)) + 15}>
            10<tspan dy="-5" fontSize="11">{i - 2}</tspan>
          </text>
        ))}
        {p.hMajor.map(([y, label, sup]) => (
          <text key={y} x={Math.round(X(l)) - 2} y={Math.round(Y(y)) + 4} textAnchor="end">
            {label}{sup && <tspan dy="-5" fontSize="11">{sup}</tspan>}
          </text>
        ))}
        <text x={X(l) + 5} y={Y(t) + 18} fontFamily="Liberation Serif, serif" fontSize="18">
          <tspan fontWeight="700">{p.quantity}</tspan>
          <tspan fontWeight="700" fontSize="10" dy="3">{p.sub}</tspan>
          <tspan fontWeight="700" dy="-3">{p.quantity === "ρ" ? "," : "),"}</tspan>
          <tspan fontSize={p.fit ? 16 : 18}> {p.unit}</tspan>
        </text>
        <text x={X(r) - 5} y={Y(b) - 8} textAnchor="end" fontFamily="Liberation Serif, serif" fontSize="18">
          <tspan fontWeight="700">T,</tspan> s
        </text>
      </svg>
    </section>
  );
}

const rhoX = [144, 180, 207, 237, 276, 309, 336, 366, 405, 438, 465, 495, 534, 570, 603, 639, 675, 702, 732, 771, 804, 831, 861, 900, 933, 960, 993, 1029, 1062, 1089, 1122, 1158, 1194, 1221, 1251, 1287, 1323, 1350, 1380, 1419];
const phiX = [138, 174, 201, 231, 270, 303, 330, 360, 399, 432, 459, 492, 528, 567, 597, 636, 669, 696, 729, 765, 798, 825, 858, 894, 930, 957, 987, 1026, 1059, 1086, 1116, 1155, 1188, 1215, 1248, 1284, 1320, 1347, 1377, 1416];

const charts: ChartProps[] = [
  {
    title: "ρ(xy)",
    quantity: "ρ",
    sub: "XY",
    unit: "Ω·m",
    fit: true,
    origin: [15, 93],
    size: [485, 330],
    frame: [112, 100, 1453, 1024],
    decades: [361, 791, 1222],
    hMajor: [[607, "10", "3"], [136, "10", "4"]],
    hDecade: 471,
    xs: rhoX,
    ys: [807, 861, 903, 936, 960, 969, 960, 942, 903, 864, 831, 792, 735, 687, 648, 606, 564, 543, 504, 474, 453, 435, 399, 393, 351, 324, 294, 261, 219, 207, 171, 195, 111, 153, 147, 174, 171, 225, 303, 378],
    dots: `144: 621 768 785-842 873 924; 177: 855-862 885-907 940-952 968; 204: 890-895 920-942 978
237: 948-997; 273: 945-952 975-995; 306: 978-982; 333: 948; 366: 948; 405: 900; 495: 786; 534: 731; 570: 683
603: 644; 675: 560; 702: 538; 732: 500; 768: 466; 801: 445; 861: 396; 933: 309-325 365-372
960: 255 290-335 345-354; 990: 183 232-275 306-335; 1029: 111 169-232 265-320
1062: 99-105 118-143 162 180-210 234-305; 1089: 100-125 138-156 185 215-285 302
1119: 97-101 130 145-163 183 205-258 267 297; 1158: 103 153-185 208-257 282
1191: 97 118-158 195-210 225-255; 1218: 103-130 160-178 195-213 234 262-272 285-300
1248: 97-103 120 160-183 198 219 267 285; 1287: 97-101 150 165 195-210 252 270-285
1320: 132-155 172-205 220-243 315; 1347: 97-107 120 145-152 175 190-205 220-228 309 357
1380: 97 142-152 170-207 228 260 310 333 369 399 423; 1416: 97-105 195-207 285-310 352-365 385-428 456`,
    curve: "144,872 180,893 207,909 237,921 276,930 309,931 336,926 366,913 405,888 438,859 465,832 495,797 534,748 570,703 603,661 639,616 675,574 702,545 732,515 771,479 804,450 831,424 861,395 900,358 933,330 960,305 993,276 1029,248 1062,221 1089,201 1122,181 1158,168 1194,164 1221,166 1251,173 1287,190 1323,216 1350,240 1380,269 1418,305",
    band: [
      "144,833 180,862 207,880 237,895 276,902 320,898 366,887 405,870 438,848 465,822 495,787 534,738 603,647 675,560 732,503 804,440 861,384 900,344 933,312 960,290 993,264 1062,214 1089,197 1122,166 1158,146 1194,136 1221,137 1251,146 1287,162 1323,188 1350,207 1380,231 1418,262",
      "144,913 207,932 237,941 276,958 310,963 340,958 366,944 405,905 438,866 465,838 495,805 534,759 603,675 675,587 732,525 804,457 861,405 900,377 933,349 993,292 1062,228 1089,212 1122,204 1158,197 1194,193 1221,195 1251,201 1287,215 1323,242 1350,270 1380,312 1418,352",
    ],
  },
  {
    title: "φ(Zxy)",
    quantity: "Arg(Z",
    sub: "XY",
    unit: "°",
    autoY: true,
    origin: [12, 93],
    size: [485, 330],
    frame: [106, 100, 1451, 1024],
    decades: [356, 787, 1219],
    hMajor: [[233, "75"], [395, "60"], [557, "45"], [719, "30"], [881, "15"]],
    xs: phiX,
    ys: [567, 543, 561, 585, 627, 702, 768, 843, 900, 930, 948, 960, 969, 966, 954, 942, 924, 906, 885, 849, 822, 810, 789, 756, 711, 675, 633, 567, 495, 447, 372, 366, 297, 288, 255, 252, 219, 213, 195, 162],
    dots: `138: 393 549 560-585 600-615 705 780 915 1022; 171: 495 513-573 600 711; 198: 411 534 552-617
231: 564-580 600-632; 267: 606-625 645-660; 303: 672-700 705-718; 330: 750-770; 360: 830-857; 396: 888-902
432: 906-942; 459: 942-953; 492: 954; 528: 960-975; 567: 966; 597: 950; 636: 938; 669: 920; 696: 902; 729: 880
765: 846; 798: 818; 825: 806; 858: 785; 894: 752; 927: 648 672-722; 954: 615 627-698; 987: 571 582 600-660
1023: 459 475 490-608; 1059: 348 390 408-425 440-560; 1086: 282 339 370-390 400-525
1116: 216 252 270 290 318-360 385-468; 1155: 189 261 282-325 345-360 375-420 444
1188: 114 190-220 243-305 320-366 381 399; 1215: 100 213-275 300-335 348; 1245: 99-107 162-182 205-218 232-295 309
1284: 103-107 144 192 207-232 250-295 324; 1317: 138-262 270-280 294; 1344: 99-227 237 294 309
1377: 99-115 130-192 205-243; 1413: 103-150 165-182 195 210-222 294-312`,
    curve: "138,511 171,548 201,583 231,626 270,683 303,736 330,776 360,818 399,866 432,900 459,922 492,942 528,955 567,959 597,955 636,945 669,930 696,913 729,889 765,861 798,833 825,807 858,775 894,738 930,692 957,657 987,612 1023,557 1059,503 1086,459 1116,415 1155,364 1188,327 1215,301 1248,271 1284,240 1320,215 1347,197 1377,177 1413,154",
    curve2: "141,426 171,450 198,481 231,521 267,577 303,635 360,733 399,798 432,846 459,879 492,911 528,935 567,952 600,957 640,957 696,950 729,941 798,921 858,897 927,865 987,829 1023,800 1059,762 1086,727 1116,683 1155,620 1188,560 1218,507 1248,452 1284,392 1320,337 1347,297 1377,262 1414,232",
  },
  {
    title: "ρ(eff)",
    quantity: "ρ",
    sub: "EF",
    unit: "Ω·m",
    fit: true,
    autoY: true,
    origin: [15, 96],
    size: [485, 332],
    frame: [112, 103, 1453, 1030],
    decades: [361, 791, 1222],
    hMajor: [[529, "10", "3"]],
    hDecade: 578,
    xs: rhoX,
    ys: [828, 876, 912, 945, 963, 975, 972, 966, 945, 927, 909, 894, 855, 819, 795, 762, 720, 702, 663, 636, 615, 603, 564, 573, 492, 450, 402, 342, 273, 252, 201, 252, 156, 225, 264, 348, 366, 423, 510, 612],
    dots: `144: 735 783 795-890 906 924; 177: 865 895-922 948 969 1028; 204: 895-957 1028; 237: 950-985 1011
273: 960-1002; 306: 975-1006; 333: 975-995; 366: 970; 405: 940; 438: 921-936; 465: 900; 495: 885; 531: 846
570: 815; 600: 787; 639: 756; 672: 717; 699: 697; 732: 659; 768: 632; 801: 612; 861: 560; 900: 569
933: 379 405 458-540; 960: 294-303 351 393-410 435-445 492-522; 990: 183 234 300-320 340-392 411 441 465-492
1029: 103 162 216-225 240 265-275 325-372 411-462; 1062: 103 130-172 192 219 255 285-378 399-414
1089: 103 155-168 219 250-330 348-384; 1119: 99-120 165 180 210-318; 1158: 103 126 144 165 200-290 309 335-357 390
1191: 103 120-145 200 270-290 315; 1218: 103 140-172 213 234 255-300 378-384; 1248: 105-152 213-250 275-295 312 339 441
1287: 103-118 220-262 280-315 335 372 414 522; 1320: 103-125 147 192-210 231 260 280-303 320-345 423 465 582
1347: 138 156-170 204 225 243-256 270-285 312-345 402-445 540 630; 1380: 147 189 219 255 280-300 315-335 417 440-485 500 558 588 612 669
1416: 192-217 249 290-300 320-348 435 474-490 517-530 561 595-605 637 684 705 744`,
    curve: "144,877 180,897 237,927 276,942 309,949 336,952 366,950 405,942 438,927 465,912 495,892 534,860 603,800 675,736 732,682 804,612 861,553 900,507 933,465 960,429 993,383 1029,337 1062,298 1089,273 1122,251 1158,242 1194,246 1221,259 1251,282 1287,325 1323,378 1350,425 1380,477 1418,542",
    band: [
      "144,847 180,872 207,892 237,910 276,923 336,934 366,934 405,928 438,917 465,905 495,885 603,788 675,720 732,666 804,597 831,562 900,474 960,402 993,365 1029,315 1062,270 1089,245 1122,211 1158,198 1194,200 1221,216 1251,252 1287,312 1323,365 1350,400 1380,444 1418,497",
      "144,908 207,935 276,962 309,970 336,971 366,967 405,952 465,920 534,870 603,810 639,780 702,722 771,658 804,625 861,580 900,538 933,495 960,453 1029,352 1062,322 1089,303 1122,292 1158,289 1194,295 1221,304 1251,322 1287,347 1323,403 1350,450 1380,513 1418,583",
    ],
  },
  {
    title: "φ(Zdet)",
    quantity: "Arg(Z",
    sub: "EF",
    unit: "°",
    autoY: true,
    origin: [12, 96],
    size: [485, 332],
    frame: [106, 103, 1451, 1030],
    decades: [356, 787, 1219],
    hMajor: [[161, "90"], [329, "75"], [497, "60"], [665, "45"], [832, "30"], [1000, "15"]],
    xs: phiX,
    ys: [648, 636, 636, 648, 666, 708, 750, 798, 831, 846, 858, 873, 888, 897, 897, 897, 891, 882, 867, 837, 807, 795, 777, 741, 708, 684, 654, 618, 588, 558, 522, 492, 462, 432, 399, 372, 339, 321, 294, 270],
    dots: `138: 543 594 610-665 705 729 858 921 954; 171: 588-675 732 747; 198: 564 594-665 681; 231: 636-660 696
267: 630-690; 303: 684-728; 330: 735-768; 360: 808; 396: 822-842; 432: 832-852; 459: 846-862; 489: 860-880; 528: 880-893
567: 890; 636: 890; 669: 886; 696: 876; 729: 862; 765: 832; 798: 802; 825: 790; 858: 770; 894: 734-748; 927: 702-716
954: 678; 987: 642-666; 1026: 612; 1059: 567-603; 1086: 546-566; 1116: 503-558; 1155: 474-528; 1188: 429-516
1215: 405-453 480-500; 1245: 372-434; 1284: 324 352-399; 1317: 267 282-297 321-365 387; 1344: 272-305 320-362 378 438
1377: 246-275 295-318 335; 1413: 192 234-295`,
    curve: "138,611 174,636 201,653 231,673 270,702 303,730 330,757 360,785 399,815 432,837 459,852 492,869 528,884 567,892 603,894 636,891 669,883 696,874 729,858 798,817 858,773 894,741 930,708 987,655 1059,587 1116,528 1188,462 1248,402 1320,340 1377,294 1413,263",
    curve2: "141,519 171,536 198,555 231,583 267,619 303,656 330,687 396,764 432,800 492,853 528,881 567,903 597,919 636,934 669,945 696,953 729,960 765,966 798,971 858,974 894,971 927,963 957,948 987,924 1023,885 1059,831 1086,780 1116,715 1155,630 1188,552 1215,485 1251,402 1284,338 1320,275 1347,233 1377,195 1414,157",
  },
];

export default function App() {
  return (
    <div className="flex h-screen flex-col overflow-hidden bg-[#e0e4e9] font-['Open_Sans','Noto_Sans',sans-serif] text-[11px] text-[#3b3b3b]">
      <TitleBar />
      <Ribbon />
      <main className="flex min-h-0 flex-1 gap-[5px] bg-[linear-gradient(#b3b8be_0,#cdd1d6_3px,#e0e4e9_4px)] pt-1">
        <LeftSide />
        <div className="grid min-w-0 flex-1 grid-cols-2 grid-rows-[358fr_360fr] gap-x-0.5 gap-y-[3px] border-t border-l border-[#a3abb6]">
          {charts.map((c) => <Chart key={c.title} {...c} />)}
        </div>
        <RightSide />
      </main>
    </div>
  );
}
